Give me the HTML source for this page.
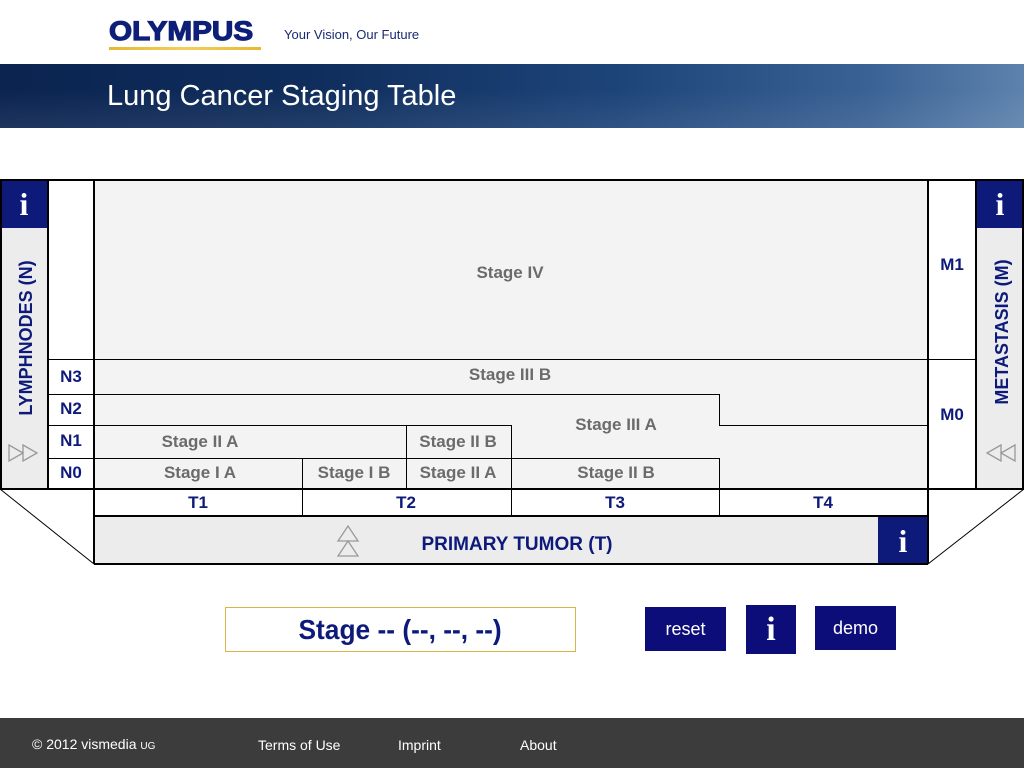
<!DOCTYPE html>
<html><head><meta charset="utf-8"><style>
html,body{margin:0;padding:0;width:1024px;height:768px;overflow:hidden;background:#fff;font-family:"Liberation Sans",sans-serif}
.abs{position:absolute}
</style></head><body>
<div class="abs" style="left:0;top:0;width:1024px;height:64px;background:#fff"></div>
<div class="abs" style="left:109px;top:16px;font:bold 27px 'Liberation Sans',sans-serif;color:#0d1f78;-webkit-text-stroke:1.2px #0d1f78;transform:scaleX(1.1);transform-origin:left">OLYMPUS</div>
<div class="abs" style="left:109px;top:47px;width:152px;height:3px;background:linear-gradient(90deg,#e8b830,#f3cf5a,#e8b830)"></div>
<div class="abs" style="left:284px;top:27px;font-size:13px;color:#1a2a70">Your Vision, Our Future</div>
<div class="abs" style="left:0;top:64px;width:1024px;height:64px;background:linear-gradient(90deg,#0b2450 0%,#0f2d5c 30%,#1d4479 60%,#3a6294 85%,#5d82ad 100%)"></div>
<div class="abs" style="left:0;top:64px;width:1024px;height:64px;background:linear-gradient(180deg,rgba(255,255,255,0) 40%,rgba(255,255,255,0.08) 100%)"></div>
<div class="abs" style="left:107px;top:80px;font-size:29px;color:#fff">Lung Cancer Staging Table</div>

<svg class="abs" style="left:0;top:0" width="1024" height="768" font-family="Liberation Sans, sans-serif" font-weight="bold">
<rect x="94" y="180" width="834" height="309" fill="#f3f3f3"/>
<rect x="48" y="180" width="46" height="309" fill="#fff"/>
<rect x="928" y="180" width="48" height="309" fill="#fff"/>
<rect x="0" y="228" width="48" height="261" fill="#ececec"/>
<rect x="976" y="228" width="48" height="261" fill="#ececec"/>
<rect x="0" y="180" width="48" height="48" fill="#0d1a7a"/>
<rect x="976" y="180" width="48" height="48" fill="#0d1a7a"/>
<rect x="94" y="516" width="834" height="48" fill="#ececec"/>
<rect x="878" y="516" width="50" height="48" fill="#0d1a7a"/>
<g fill="none" stroke="#000" stroke-width="2">
<rect x="1" y="180" width="1022" height="309"/>
<line x1="48" y1="180" x2="48" y2="489"/>
<line x1="94" y1="180" x2="94" y2="564"/>
<line x1="928" y1="180" x2="928" y2="564"/>
<line x1="976" y1="180" x2="976" y2="489"/>
<line x1="94" y1="516" x2="928" y2="516"/>
<line x1="94" y1="564" x2="928" y2="564"/>
</g>
<g fill="none" stroke="#000" stroke-width="1">
<line x1="0" y1="489" x2="94" y2="564"/>
<line x1="1024" y1="489" x2="928" y2="564"/>
<line x1="48" y1="359.5" x2="976" y2="359.5"/>
<line x1="48" y1="394.5" x2="719" y2="394.5"/>
<line x1="719.5" y1="394" x2="719.5" y2="425"/>
<line x1="719" y1="425.5" x2="928" y2="425.5"/>
<line x1="48" y1="425.5" x2="511" y2="425.5"/>
<line x1="48" y1="458.5" x2="719" y2="458.5"/>
<line x1="719.5" y1="458" x2="719.5" y2="489"/>
<line x1="406.5" y1="425" x2="406.5" y2="489"/>
<line x1="511.5" y1="425" x2="511.5" y2="516"/>
<line x1="302.5" y1="458" x2="302.5" y2="516"/>
<line x1="719.5" y1="489" x2="719.5" y2="516"/>
</g>
<g fill="#6b6b6b" font-size="17" text-anchor="middle">
<text x="510" y="278">Stage IV</text>
<text x="510" y="380">Stage III B</text>
<text x="616" y="430">Stage III A</text>
<text x="200" y="447">Stage II A</text>
<text x="458" y="447">Stage II B</text>
<text x="200" y="478">Stage I A</text>
<text x="354" y="478">Stage I B</text>
<text x="458" y="478">Stage II A</text>
<text x="616" y="478">Stage II B</text>
</g>
<g fill="#0d1a7a" font-size="17" text-anchor="middle">
<text x="71" y="382">N3</text>
<text x="71" y="414">N2</text>
<text x="71" y="446">N1</text>
<text x="71" y="478">N0</text>
<text x="952" y="270">M1</text>
<text x="952" y="420">M0</text>
<text x="198" y="508">T1</text>
<text x="406" y="508">T2</text>
<text x="615" y="508">T3</text>
<text x="823" y="508">T4</text>
<text x="517" y="550" font-size="19">PRIMARY TUMOR (T)</text>
<text transform="translate(32,338) rotate(-90)" font-size="18">LYMPHNODES (N)</text>
<text transform="translate(1008,332) rotate(-90)" font-size="18">METASTASIS (M)</text>
</g>
<g fill="#fff" font-family="Liberation Serif, serif" font-size="32" text-anchor="middle">
<text x="24" y="215">i</text>
<text x="1000" y="215">i</text>
<text x="903" y="552">i</text>
</g>
<g fill="none" stroke="#999" stroke-width="1.3">
<path d="M9 445 L23 453 L9 461 Z M23 445 L37 453 L23 461 Z"/>
<path d="M1015 445 L1001 453 L1015 461 Z M1001 445 L987 453 L1001 461 Z"/>
<path d="M338 541 L348 526 L358 541 Z M338 556 L348 541 L358 556 Z"/>
</g>
</svg>

<div class="abs" style="left:225px;top:607px;width:349px;height:43px;border:1px solid #d9b548;text-align:center;line-height:43px;font-weight:bold;font-size:28px;color:#0d1a7a"><span style="display:inline-block;transform:scaleX(0.94)">Stage -- (--, --, --)</span></div>
<div class="abs" style="left:645px;top:607px;width:81px;height:44px;background:#0d0d7a;color:#fff;font-size:18px;text-align:center;line-height:44px">reset</div>
<div class="abs" style="left:746px;top:605px;width:50px;height:49px;background:#0d0d7a;color:#fff;font:bold 34px 'Liberation Serif',serif;text-align:center;line-height:49px">i</div>
<div class="abs" style="left:815px;top:606px;width:81px;height:44px;background:#0d0d7a;color:#fff;font-size:18px;text-align:center;line-height:44px">demo</div>

<div class="abs" style="left:0;top:718px;width:1024px;height:50px;background:#3c3c3c;color:#fff;font-size:14px">
<span class="abs" style="left:32px;top:18px">© 2012 vismedia <span style="font-size:10px">UG</span></span>
<span class="abs" style="left:258px;top:19px">Terms of Use</span>
<span class="abs" style="left:398px;top:19px">Imprint</span>
<span class="abs" style="left:520px;top:19px">About</span>
</div>
</body></html>
